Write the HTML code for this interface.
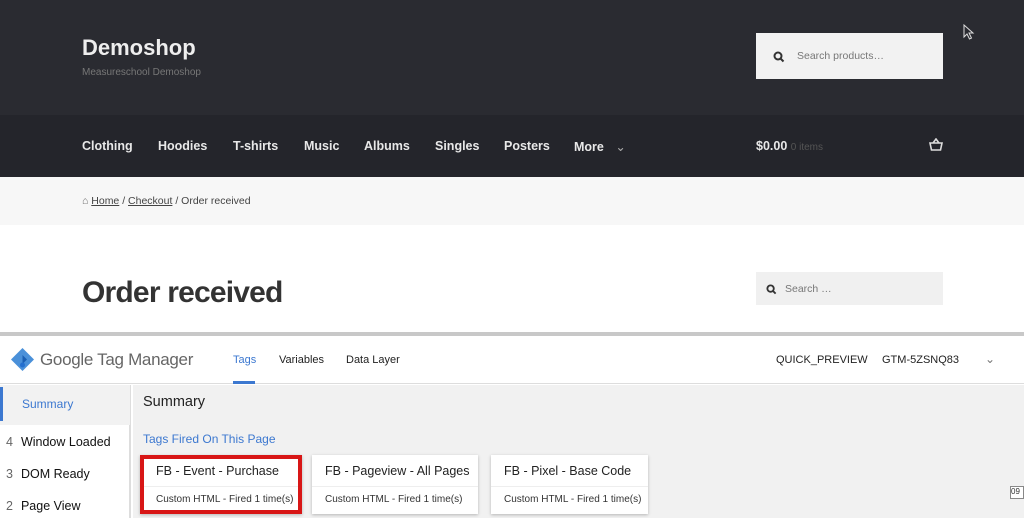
<!DOCTYPE html><html><head><style>
*{margin:0;padding:0;box-sizing:border-box}
body{width:1024px;height:518px;overflow:hidden;font-family:"Liberation Sans",sans-serif;background:#fff;position:relative}
.a{position:absolute}
.nav span{position:absolute;top:139px;color:#e8e8e8;font-weight:bold;font-size:12.5px}
.card{position:absolute;top:455px;height:59px;background:#fff;box-shadow:0 1px 3px rgba(0,0,0,.25)}
.card .t{position:absolute;left:13px;top:9px;font-size:12.5px;color:#222}
.card .s{position:absolute;left:13px;top:39px;font-size:10px;color:#333}
.card .l{position:absolute;left:0;right:0;top:31px;border-top:1px solid #eee}
.side div{position:absolute;left:6px;font-size:12.5px;color:#111}
.side b{font-weight:normal;color:#666;margin-right:8px}
</style></head><body>
<div class="a" style="left:0;top:0;width:1024px;height:115px;background:#2a2b31"></div>
<div class="a" style="left:0;top:115px;width:1024px;height:62px;background:#24252b"></div>
<div class="a" style="left:82px;top:35px;color:#eee;font-weight:bold;font-size:22px">Demoshop</div>
<div class="a" style="left:82px;top:67px;color:#777;font-size:10px">Measureschool Demoshop</div>
<div class="a" style="left:756px;top:33px;width:187px;height:46px;background:#f2f2f2"></div>
<svg class="a" style="left:773px;top:51px" width="12" height="12" viewBox="0 0 12 12"><circle cx="5" cy="5" r="3.5" stroke="#333" stroke-width="2" fill="none"/><path d="M7.5 7.5l3 3" stroke="#333" stroke-width="2"/></svg>
<div class="a" style="left:797px;top:50px;color:#777;font-size:10.5px">Search products…</div>
<svg class="a" style="left:963px;top:24px" width="12" height="16" viewBox="0 0 12 16"><path d="M1 1v12l3-3 2.5 5 2-1-2.5-5h4z" fill="#2a2b31" stroke="#ddd" stroke-width="1"/></svg>
<div class="nav"><span style="left:82px">Clothing</span><span style="left:158px">Hoodies</span><span style="left:233px">T-shirts</span><span style="left:304px">Music</span><span style="left:364px">Albums</span><span style="left:435px">Singles</span><span style="left:504px">Posters</span><span style="left:574px">More <span style="position:static;color:#aaa;font-weight:normal;margin-left:8px">⌄</span></span><span style="left:756px">$0.00 <span style="position:static;color:#555;font-weight:normal;font-size:10px">0 items</span></span></div>
<svg class="a" style="left:929px;top:138px" width="14" height="14" viewBox="0 0 14 14"><path d="M1 5h12l-1.5 7h-9z M4 5l3-4 3 4" stroke="#ddd" stroke-width="1.6" fill="none"/></svg>
<div class="a" style="left:0;top:177px;width:1024px;height:48px;background:#f7f7f7"></div>
<div class="a" style="left:82px;top:195px;font-size:10.5px;color:#444"><span style="color:#666">⌂</span> <u>Home</u> / <u>Checkout</u> / Order received</div>
<div class="a" style="left:82px;top:276px;font-size:30px;font-weight:bold;color:#333;letter-spacing:-0.8px">Order received</div>
<div class="a" style="left:756px;top:272px;width:187px;height:33px;background:#f0f0f0"></div>
<svg class="a" style="left:766px;top:284px" width="11" height="11" viewBox="0 0 12 12"><circle cx="5" cy="5" r="3.5" stroke="#333" stroke-width="2" fill="none"/><path d="M7.5 7.5l3 3" stroke="#333" stroke-width="2"/></svg>
<div class="a" style="left:785px;top:283px;color:#777;font-size:10.5px">Search …</div>
<div class="a" style="left:0;top:332px;width:1024px;height:4px;background:#c8c8c8"></div>
<div class="a" style="left:0;top:336px;width:1024px;height:48px;background:#fff;border-bottom:1px solid #ddd"></div>
<svg class="a" style="left:10px;top:347px" width="25" height="25" viewBox="0 0 25 25"><path d="M12.5 1L24 12.5 12.5 24 1 12.5z" fill="#4a90d9"/><path d="M12.5 8l4.5 4.5-4.5 4.5" fill="#1a5fb4"/><circle cx="12.5" cy="18" r="2.5" fill="#246fcf"/></svg>
<div class="a" style="left:40px;top:350px;font-size:17px;color:#666;letter-spacing:-0.3px">Google Tag Manager</div>
<div class="a" style="left:233px;top:354px;font-size:11px;color:#3c78d0">Tags</div>
<div class="a" style="left:233px;top:381px;width:22px;height:3px;background:#3c78d0"></div>
<div class="a" style="left:279px;top:354px;font-size:11px;color:#222">Variables</div>
<div class="a" style="left:346px;top:354px;font-size:11px;color:#222">Data Layer</div>
<div class="a" style="left:776px;top:354px;font-size:11px;color:#222">QUICK_PREVIEW</div>
<div class="a" style="left:882px;top:354px;font-size:11px;color:#222">GTM-5ZSNQ83</div>
<div class="a" style="left:985px;top:352px;font-size:12px;color:#777">⌄</div>
<div class="a" style="left:0;top:385px;width:131px;height:133px;background:#fff;border-right:2px solid #ddd"></div>
<div class="a" style="left:0;top:385px;width:130px;height:40px;background:#f2f2f2"></div>
<div class="a" style="left:0;top:387px;width:3px;height:34px;background:#3c78d0"></div>
<div class="a" style="left:133px;top:385px;width:891px;height:133px;background:#f1f1f1"></div>
<div class="a" style="left:22px;top:397px;font-size:12px;color:#3c78d0">Summary</div>
<div class="side"><div style="top:435px"><b>4</b>Window Loaded</div><div style="top:467px"><b>3</b>DOM Ready</div><div style="top:499px"><b>2</b>Page View</div></div>
<div class="a" style="left:143px;top:394px;font-size:14.5px;color:#222">Summary</div>
<div class="a" style="left:143px;top:432px;font-size:12px;color:#3c78d0">Tags Fired On This Page</div>
<div class="card" style="left:140px;width:162px;border:4px solid #d81616"><div class="t" style="left:12px;top:5px">FB - Event - Purchase</div><div class="l" style="top:27px"></div><div class="s" style="left:12px;top:35px">Custom HTML - Fired 1 time(s)</div></div>
<div class="card" style="left:312px;width:166px"><div class="t">FB - Pageview - All Pages</div><div class="l"></div><div class="s">Custom HTML - Fired 1 time(s)</div></div>
<div class="card" style="left:491px;width:157px"><div class="t">FB - Pixel - Base Code</div><div class="l"></div><div class="s">Custom HTML - Fired 1 time(s)</div></div>
<div class="a" style="left:1010px;top:486px;width:14px;height:13px;border:1px solid #888;font-size:8px;color:#333;background:#fff">09</div>
</body></html>
